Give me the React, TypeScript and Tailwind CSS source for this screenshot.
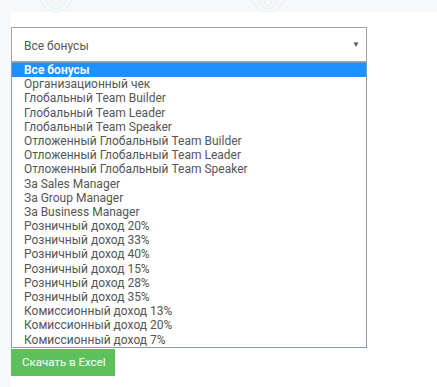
import React from "react";

const items = [
  "Все бонусы",
  "Организационный чек",
  "Глобальный Team Builder",
  "Глобальный Team Leader",
  "Глобальный Team Speaker",
  "Отложенный Глобальный Team Builder",
  "Отложенный Глобальный Team Leader",
  "Отложенный Глобальный Team Speaker",
  "За Sales Manager",
  "За Group Manager",
  "За Business Manager",
  "Розничный доход 20%",
  "Розничный доход 33%",
  "Розничный доход 40%",
  "Розничный доход 15%",
  "Розничный доход 28%",
  "Розничный доход 35%",
  "Комиссионный доход 13%",
  "Комиссионный доход 20%",
  "Комиссионный доход 7%",
];

function Ornament({ className }: { className: string }) {
  return (
    <svg className={className} width="40" height="14" viewBox="0 0 40 14" fill="none">
      <path d="M4 0 C8 8 14 12 20 12 C26 12 32 8 36 0" stroke="#e6f2f6" strokeWidth="1.2" />
      <path d="M10 0 C13 6 16 9 20 9 C24 9 27 6 30 0" stroke="#e6f2f6" strokeWidth="1.2" />
      <path d="M16 0 C17 4 18 6 20 6 C22 6 23 4 24 0" stroke="#e6f2f6" strokeWidth="1.2" />
    </svg>
  );
}

export default function App() {
  return (
    <div
      className="relative w-[437px] h-[387px] bg-[#f7f8fa] overflow-hidden flex flex-col"
      style={{ fontFamily: "Roboto, 'Noto Sans', sans-serif" }}
    >
      <Ornament className="absolute left-[36px] top-0" />
      <Ornament className="absolute left-[248px] top-0" />
      <div className="h-[12px] shrink-0" />
      <div className="flex flex-1">
        <div className="w-[11px] shrink-0 bg-[#f6f8f9]" />
        <div className="flex-1 bg-white pt-[15px] flex flex-col">
          <div className="w-[356px] h-[35px] border border-[#a3a3a3] bg-white flex items-center justify-between pl-[12px] pr-[6px]">
            <span className="text-[12px] text-[#555] pt-[2px]">Все бонусы</span>
            <span className="text-[8px] text-[#555] leading-none">▼</span>
          </div>
          <div className="w-[356px] border border-[#7f9db9] bg-white flex flex-col">
            {items.map((t, i) => (
              <div
                key={t}
                className={
                  i === 0
                    ? "h-[14.2px] leading-[14.2px] pl-[12px] text-[12px] bg-[#1e90ff] text-white font-semibold"
                    : "h-[14.2px] leading-[14.2px] pl-[12px] text-[12px] text-[#555]"
                }
              >
                {t}
              </div>
            ))}
          </div>
          <div className="mt-[1px] w-[104px] h-[27px] bg-[#5cc05c] flex items-center pl-[11px]">
            <span className="text-[11.5px] text-white">Скачать в Excel</span>
          </div>
        </div>
      </div>
    </div>
  );
}
